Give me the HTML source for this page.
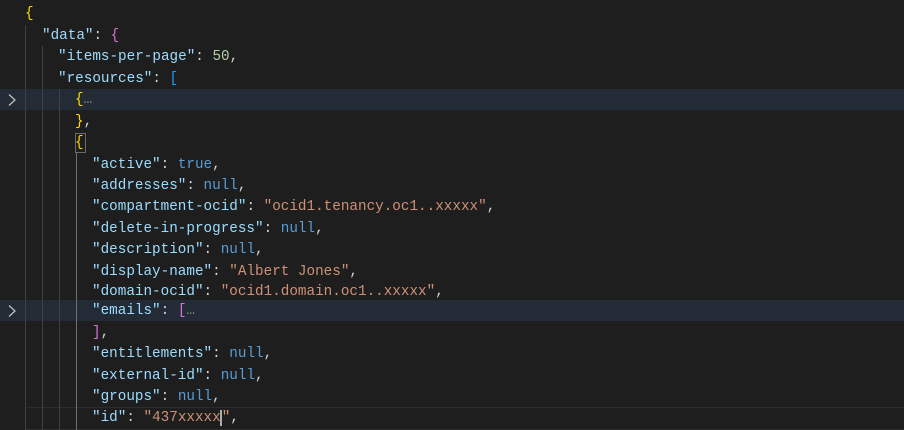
<!DOCTYPE html>
<html><head><style>
body{margin:0;width:904px;height:430px;background:#1e1e1e;overflow:hidden;position:relative;font-family:"Liberation Mono",monospace;font-size:14.3px;}
.l{position:absolute;left:0;width:904px;height:21.4px;line-height:21.4px;white-space:pre;color:#d4d4d4}
.hl{background:#232b36}
.k{color:#9cdcfe}.s{color:#ce9178}.n{color:#b5cea8}.b{color:#569cd6}
.y{color:#ffd700}.p{color:#da70d6}.bl{color:#179fff}.d{color:#8a8a8a}
.g{position:absolute;width:1px;background:#404040}
.chev{position:absolute;left:7px}
</style></head><body>
<div class="l hl" style="top:89px"></div>
<div class="l hl" style="top:300px"></div>
<div style="position:absolute;left:25px;top:407px;width:879px;height:21px;border-top:1px solid #2c2c2c;border-bottom:1px solid #2c2c2c"></div>
<div class="g" style="left:25px;top:25px;height:405px"></div>
<div class="g" style="left:42px;top:46px;height:384px"></div>
<div class="g" style="left:59px;top:89px;height:341px"></div>
<div class="g" style="left:76px;top:153px;height:277px;background:#707070"></div>
<div style="position:absolute;left:75px;top:133px;width:9px;height:18px;border:1px solid #6a6a6a"></div>
<svg class="chev" style="top:93px" width="10" height="14"><path d="M2 1.5 L8 7 L2 12.5" fill="none" stroke="#c5c5c5" stroke-width="1.2"/></svg>
<svg class="chev" style="top:304px" width="10" height="14"><path d="M2 1.5 L8 7 L2 12.5" fill="none" stroke="#c5c5c5" stroke-width="1.2"/></svg>
<div class="l" style="top:4px;padding-left:25px"><span class="y">{</span></div>
<div class="l" style="top:26px;padding-left:42px"><span class="k">"data"</span>: <span class="p">{</span></div>
<div class="l" style="top:47px;padding-left:58px"><span class="k">"items-per-page"</span>: <span class="n">50</span>,</div>
<div class="l" style="top:69px;padding-left:58px"><span class="k">"resources"</span>: <span class="bl">[</span></div>
<div class="l" style="top:90px;padding-left:75px"><span class="y">{</span><span class="d">…</span></div>
<div class="l" style="top:112px;padding-left:75px"><span class="y">}</span>,</div>
<div class="l" style="top:133px;padding-left:75px"><span class="y">{</span></div>
<div class="l" style="top:155px;padding-left:92px"><span class="k">"active"</span>: <span class="b">true</span>,</div>
<div class="l" style="top:176px;padding-left:92px"><span class="k">"addresses"</span>: <span class="b">null</span>,</div>
<div class="l" style="top:197px;padding-left:92px"><span class="k">"compartment-ocid"</span>: <span class="s">"ocid1.tenancy.oc1..xxxxx"</span>,</div>
<div class="l" style="top:219px;padding-left:92px"><span class="k">"delete-in-progress"</span>: <span class="b">null</span>,</div>
<div class="l" style="top:240px;padding-left:92px"><span class="k">"description"</span>: <span class="b">null</span>,</div>
<div class="l" style="top:262px;padding-left:92px"><span class="k">"display-name"</span>: <span class="s">"Albert Jones"</span>,</div>
<div class="l" style="top:282px;padding-left:92px"><span class="k">"domain-ocid"</span>: <span class="s">"ocid1.domain.oc1..xxxxx"</span>,</div>
<div class="l" style="top:301px;padding-left:92px"><span class="k">"emails"</span>: <span class="p">[</span><span class="d">…</span></div>
<div class="l" style="top:323px;padding-left:92px"><span class="p">]</span>,</div>
<div class="l" style="top:344px;padding-left:92px"><span class="k">"entitlements"</span>: <span class="b">null</span>,</div>
<div class="l" style="top:366px;padding-left:92px"><span class="k">"external-id"</span>: <span class="b">null</span>,</div>
<div class="l" style="top:387px;padding-left:92px"><span class="k">"groups"</span>: <span class="b">null</span>,</div>
<div class="l" style="top:408px;padding-left:92px"><span class="k">"id"</span>: <span class="s">"437xxxxx</span><span style="border-left:2px solid #aeafad;margin-left:-1px"></span><span class="s">"</span>,</div>
</body></html>
